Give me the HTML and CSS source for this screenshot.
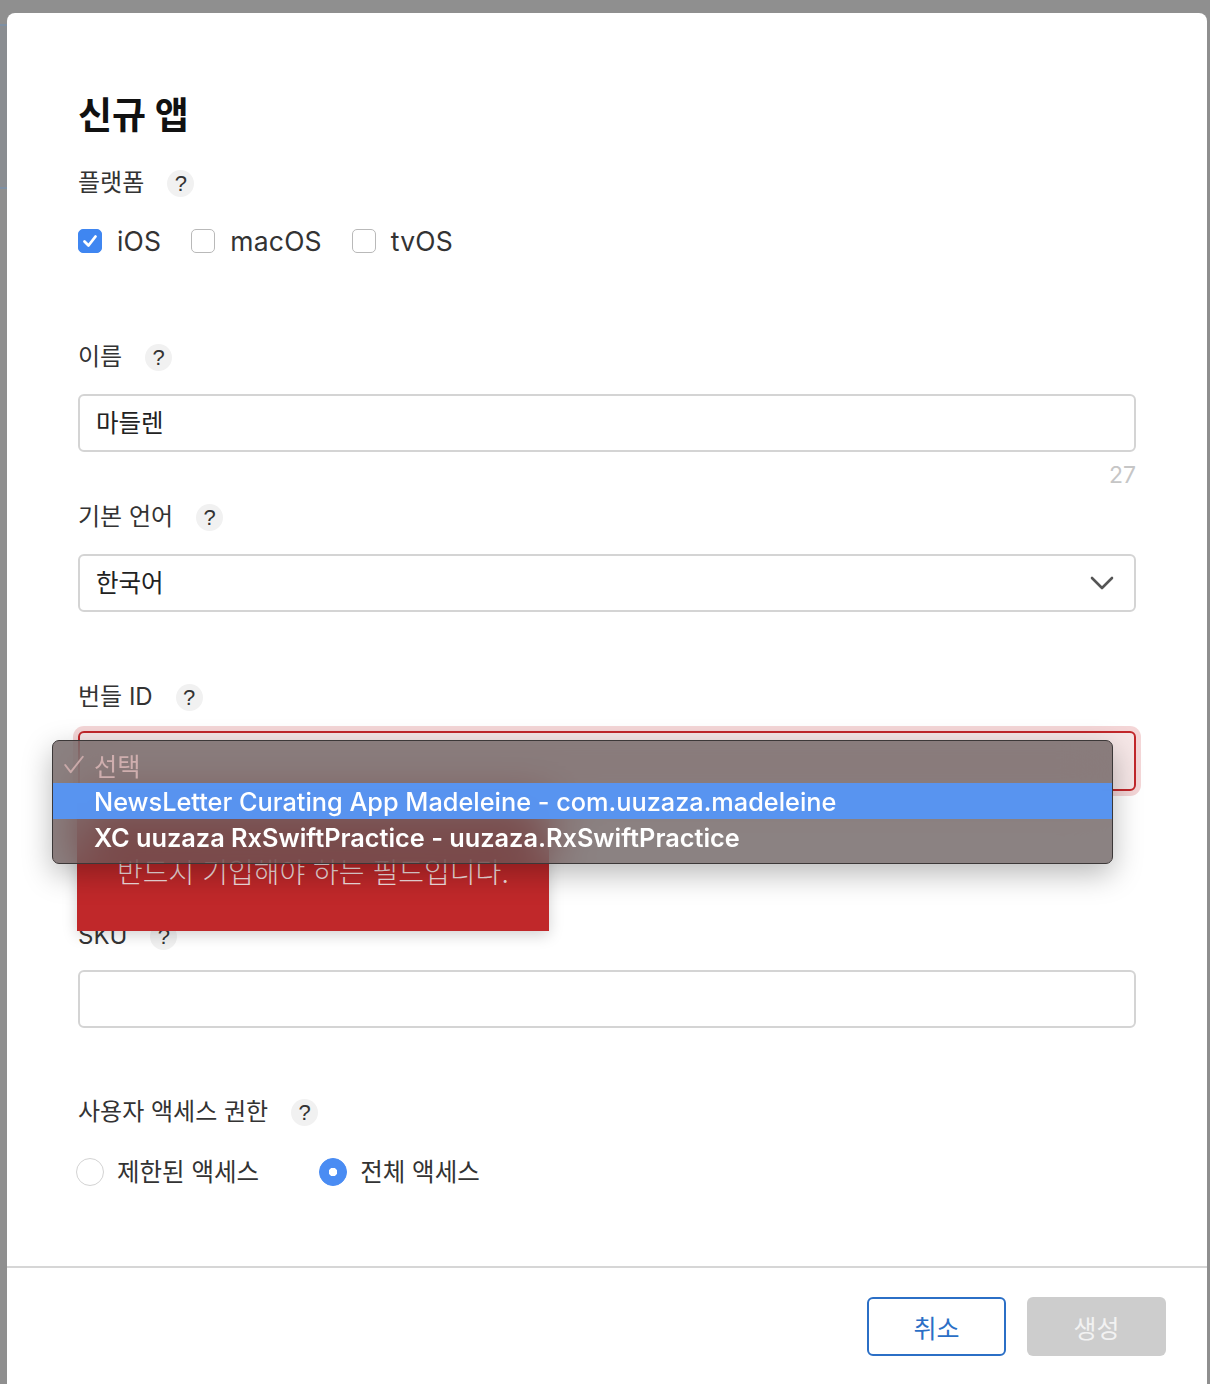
FILE: index.html
```html
<!DOCTYPE html>
<html lang="ko">
<head>
<meta charset="utf-8">
<title>신규 앱</title>
<link rel="stylesheet" href="styles.css">
</head>
<body>
<div class="modal">
  <div class="form">
    <h1 class="title">신규 앱</h1>

    <div class="label lbl-platform"><span>플랫폼</span><span class="help">?</span></div>
    <div class="checks">
      <label class="check"><span class="box on"><svg viewBox="0 0 24 24" width="24" height="24"><polyline points="6.5,12.5 10.5,16.5 17.5,7.5" fill="none" stroke="#fff" stroke-width="2.8" stroke-linecap="round" stroke-linejoin="round"/></svg></span><span class="ctext">iOS</span></label>
      <label class="check"><span class="box"></span><span class="ctext">macOS</span></label>
      <label class="check"><span class="box"></span><span class="ctext">tvOS</span></label>
    </div>

    <div class="label lbl-name"><span>이름</span><span class="help">?</span></div>
    <div class="input"><span class="value">마들렌</span></div>
    <div class="counter">27</div>

    <div class="label lbl-lang"><span>기본 언어</span><span class="help">?</span></div>
    <div class="input select"><span class="value">한국어</span>
      <svg class="chev" viewBox="0 0 24 16" width="24" height="16"><polyline points="2,3 12,13 22,3" fill="none" stroke="#555" stroke-width="2.6" stroke-linecap="round" stroke-linejoin="round"/></svg>
    </div>

    <div class="label lbl-bundle"><span>번들 ID</span><span class="help">?</span></div>
    <div class="bundle-wrap">
      <div class="input select error"></div>
      <div class="tooltip"><span>반드시 기입해야 하는 필드입니다.</span></div>
      <div class="menu">
        <div class="mrow disabled"><svg class="tick" viewBox="0 0 20 20" width="22" height="22"><polyline points="2,10 7,16.5 18,2.5" fill="none" stroke="#c9a9a9" stroke-width="1.8" stroke-linecap="round" stroke-linejoin="round"/></svg><span>선택</span></div>
        <div class="mrow active"><span>NewsLetter Curating App Madeleine - com.uuzaza.madeleine</span></div>
        <div class="mrow strong"><span>XC uuzaza RxSwiftPractice - uuzaza.RxSwiftPractice</span></div>
      </div>
    </div>

    <div class="label lbl-sku"><span>SKU</span><span class="help">?</span></div>
    <div class="input sku"></div>

    <div class="label lbl-access"><span>사용자 액세스 권한</span><span class="help">?</span></div>
    <div class="radios">
      <label class="radio"><span class="circle"></span><span class="rtext">제한된 액세스</span></label>
      <label class="radio"><span class="circle on"></span><span class="rtext">전체 액세스</span></label>
    </div>
  </div>
  <div class="footer">
    <button class="btn cancel">취소</button>
    <button class="btn create">생성</button>
  </div>
</div>
</body>
</html>
```
FILE: styles.css
```css
* { box-sizing: border-box; }
html, body { margin: 0; padding: 0; }
body {
  width: 1210px;
  height: 1384px;
  overflow: hidden;
  font-family: "Inter", "Noto Sans CJK KR", sans-serif;
  background:
    linear-gradient(to bottom, transparent 24px, #7e90a4 24px, #7e90a4 26px, #8a8d91 26px, #8a8d91 187px, #7e90a4 187px, #7e90a4 189px, transparent 189px) no-repeat 0 0 / 7px 200px,
    #8f8f8f;
  padding: 13px 0 0 7px;
}
.modal {
  width: 1200px;
  height: 1380px;
  background: #fff;
  border-radius: 8px;
}
.form {
  height: 1253px;
  padding: 81px 71px 0 71px;
  color: #333;
}
.title {
  margin: 0;
  height: 44px;
  line-height: 44px;
  font-size: 37px;
  font-weight: 700;
  color: #111;
}
.label {
  display: flex;
  align-items: center;
  height: 30px;
  font-size: 24px;
  line-height: 30px;
  color: #333;
  gap: 23px;
}
.help {
  width: 27px;
  height: 27px;
  border-radius: 50%;
  background: #f1f1f1;
  color: #333;
  font-family: "Liberation Sans", sans-serif;
  font-size: 22px;
  line-height: 27px;
  text-align: center;
}
.lbl-platform { margin-top: 30px; }
.checks {
  margin-top: 28px;
  height: 30px;
  display: flex;
  align-items: center;
  gap: 30px;
}
.check { display: flex; align-items: center; gap: 15px; }
.box {
  width: 24px;
  height: 24px;
  border-radius: 5px;
  border: 1px solid #b9b9b9;
  background: #fff;
  display: block;
}
.box.on { background: #3f86f1; border-color: #3f86f1; }
.box svg { display: block; margin: -1px; }
.ctext { font-size: 26.5px; line-height: 30px; color: #333; letter-spacing: 0.2px; }

.lbl-name { margin-top: 86px; }
.input {
  margin-top: 22px;
  height: 58px;
  border: 2px solid #d4d4d4;
  border-radius: 6px;
  display: flex;
  align-items: center;
  padding: 0 16px;
  position: relative;
}
.value { font-size: 24.5px; color: #222; line-height: 30px; }
.counter {
  margin-top: 11px;
  height: 24px;
  line-height: 24px;
  text-align: right;
  font-size: 23px;
  color: #c6c6c6;
}
.lbl-lang { margin-top: 15px; }
.select .chev { position: absolute; right: 20px; top: 19px; }

.lbl-bundle { margin-top: 70px; }
.bundle-wrap { position: relative; margin-top: 19px; height: 60px; }
.input.error {
  margin-top: 0;
  height: 60px;
  border-color: #c2272b;
  background: #f6e7e7;
  box-shadow: 0 0 0 5px rgba(200, 50, 55, 0.2);
}
.tooltip {
  position: absolute;
  left: -1px;
  top: 72px;
  width: 472px;
  height: 128px;
  background: linear-gradient(to bottom, #a62326, #c0282a 40%, #c0282a);
  box-shadow: 0 4px 14px rgba(0, 0, 0, 0.18);
  padding: 53px 0 0 40px;
  color: #f3dede;
  font-size: 28px;
  font-weight: 300;
  line-height: 34px;
  z-index: 1;
}
.menu {
  position: absolute;
  left: -26px;
  top: 9px;
  width: 1061px;
  height: 124px;
  border-radius: 7px;
  border: 1px solid #3c3838;
  background: rgba(98, 86, 86, 0.74);
  backdrop-filter: blur(24px);
  -webkit-backdrop-filter: blur(24px);
  box-shadow: 0 10px 30px rgba(0, 0, 0, 0.28);
  padding-top: 6px;
  z-index: 2;
  overflow: hidden;
}
.mrow {
  height: 36px;
  display: flex;
  align-items: center;
  padding-left: 41px;
  position: relative;
  font-size: 25.3px;
  color: #fff;
  font-weight: 500;
}
.mrow.disabled { color: #cfaeae; font-weight: 400; }
.mrow .tick {
  position: absolute;
  left: 10px;
  top: 7px;
}
.mrow.active { background: rgba(86, 150, 246, 0.96); }
.mrow.strong { font-weight: 600; }

.lbl-sku { margin-top: 130px; }
.input.sku { margin-top: 19px; }

.lbl-access { margin-top: 69px; }
.radios {
  margin-top: 30px;
  height: 30px;
  display: flex;
  align-items: center;
  gap: 60px;
  margin-left: -2px;
}
.radio { display: flex; align-items: center; gap: 13px; }
.circle {
  width: 28px;
  height: 28px;
  border-radius: 50%;
  border: 1px solid #d3d3d3;
  background: #fff;
  display: block;
}
.circle.on {
  background: #4a8cf3 radial-gradient(circle, #fff 0 4px, transparent 4.5px);
  border-color: #4a8cf3;
}
.rtext { font-size: 24.5px; color: #333; line-height: 30px; }

.footer {
  border-top: 2px solid #d6d6d6;
  padding: 29px 41px 0 0;
  display: flex;
  justify-content: flex-end;
  gap: 21px;
}
.btn {
  width: 139px;
  height: 59px;
  border-radius: 6px;
  font-family: "Inter", "Noto Sans CJK KR", sans-serif;
  font-size: 25px;
  cursor: pointer;
}
.btn.cancel {
  background: #fff;
  border: 2px solid #2b6fc6;
  color: #2b6fc6;
}
.btn.create {
  background: #cdcdcd;
  border: none;
  color: #f2f2f2;
}
```
